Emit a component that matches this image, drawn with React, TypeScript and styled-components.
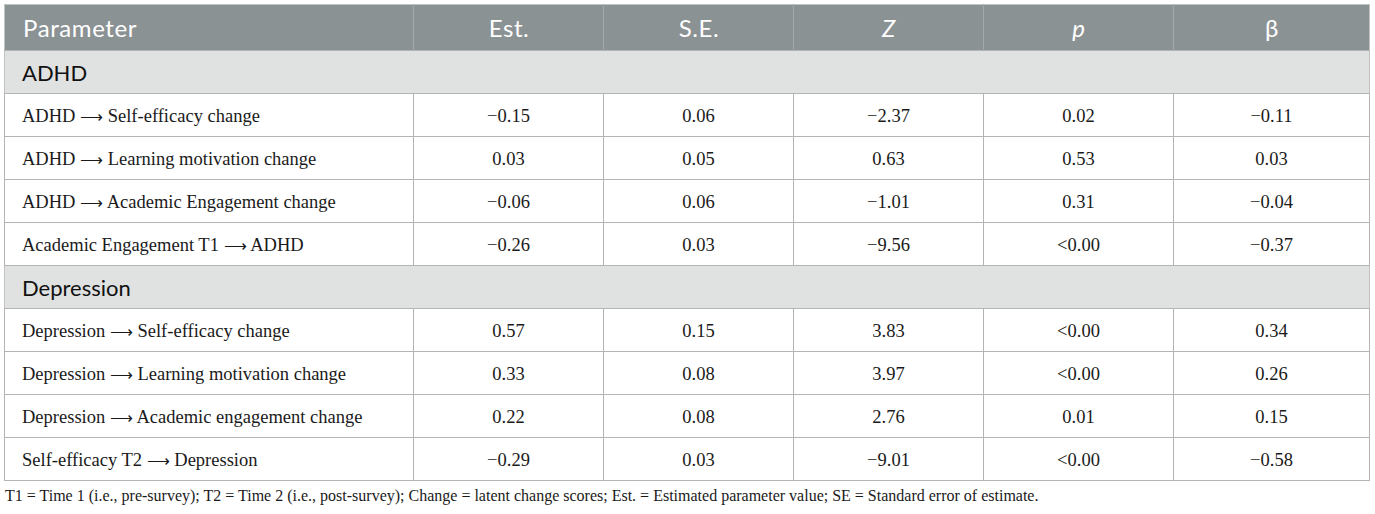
import React from "react";
import styled, { createGlobalStyle } from "styled-components";

const GlobalStyle = createGlobalStyle`
  html, body {
    margin: 0;
    padding: 0;
    background: #fff;
  }
`;

const Page = styled.div`
  padding: 4px 5px 0 4px;
`;

const Table = styled.table`
  width: 1366px;
  border-collapse: collapse;
  table-layout: fixed;
  border: 1px solid #c2c4c4;
`;

const HeadCell = styled.th<{ $align?: string; $italic?: boolean }>`
  height: 46px;
  box-sizing: border-box;
  background: #8b9294;
  color: #fff;
  font-family: Lato, "Open Sans", sans-serif;
  font-weight: 400;
  font-size: 24px;
  letter-spacing: 0.6px;
  font-style: ${(p) => (p.$italic ? "italic" : "normal")};
  text-align: ${(p) => p.$align || "center"};
  padding: 0 17px 0 18px;
  border-left: 1px solid #a3a8aa;
  &:first-child {
    border-left: none;
  }
`;

const SectionCell = styled.td`
  height: 43px;
  box-sizing: border-box;
  background: #e0e2e1;
  color: #111;
  font-family: Lato, "Open Sans", sans-serif;
  font-size: 22px;
  padding: 0 17px;
  border-top: 1px solid #b3b5b5;
  border-bottom: 1px solid #b3b5b5;
`;

const Cell = styled.td<{ $align?: string }>`
  height: 43px;
  box-sizing: border-box;
  color: #1a1a1a;
  font-family: "Liberation Serif", serif;
  font-size: 18.5px;
  text-align: ${(p) => p.$align || "center"};
  padding: 2px 17px 0;
  border: 1px solid #b3b5b5;
`;

const Arrow = styled.span`
  font-family: "DejaVu Sans", sans-serif;
  font-weight: 200;
  font-size: 16px;
`;

const Note = styled.div`
  margin-top: 6px;
  padding-left: 1px;
  font-family: "Liberation Serif", serif;
  font-size: 16px;
  color: #1a1a1a;
`;

type Row = [string, string, string, string, string, string];

const sections: { title: string; rows: Row[] }[] = [
  {
    title: "ADHD",
    rows: [
      ["ADHD|Self-efficacy change", "−0.15", "0.06", "−2.37", "0.02", "−0.11"],
      ["ADHD|Learning motivation change", "0.03", "0.05", "0.63", "0.53", "0.03"],
      ["ADHD|Academic Engagement change", "−0.06", "0.06", "−1.01", "0.31", "−0.04"],
      ["Academic Engagement T1|ADHD", "−0.26", "0.03", "−9.56", "<0.00", "−0.37"],
    ],
  },
  {
    title: "Depression",
    rows: [
      ["Depression|Self-efficacy change", "0.57", "0.15", "3.83", "<0.00", "0.34"],
      ["Depression|Learning motivation change", "0.33", "0.08", "3.97", "<0.00", "0.26"],
      ["Depression|Academic engagement change", "0.22", "0.08", "2.76", "0.01", "0.15"],
      ["Self-efficacy T2|Depression", "−0.29", "0.03", "−9.01", "<0.00", "−0.58"],
    ],
  },
];

function Path({ text }: { text: string }) {
  const [from, to] = text.split("|");
  return (
    <>
      {from} <Arrow>⟶</Arrow> {to}
    </>
  );
}

export default function App() {
  return (
    <Page>
      <GlobalStyle />
      <Table>
        <colgroup>
          <col style={{ width: 409 }} />
          <col style={{ width: 190 }} />
          <col style={{ width: 190 }} />
          <col style={{ width: 190 }} />
          <col style={{ width: 190 }} />
          <col />
        </colgroup>
        <thead>
          <tr>
            <HeadCell $align="left">Parameter</HeadCell>
            <HeadCell>Est.</HeadCell>
            <HeadCell>S.E.</HeadCell>
            <HeadCell $italic>Z</HeadCell>
            <HeadCell $italic>p</HeadCell>
            <HeadCell>β</HeadCell>
          </tr>
        </thead>
        <tbody>
          {sections.map((s) => (
            <React.Fragment key={s.title}>
              <tr>
                <SectionCell colSpan={6}>{s.title}</SectionCell>
              </tr>
              {s.rows.map((r) => (
                <tr key={r[0]}>
                  <Cell $align="left">
                    <Path text={r[0]} />
                  </Cell>
                  {r.slice(1).map((v, i) => (
                    <Cell key={i}>{v}</Cell>
                  ))}
                </tr>
              ))}
            </React.Fragment>
          ))}
        </tbody>
      </Table>
      <Note>
        T1 = Time 1 (i.e., pre-survey); T2 = Time 2 (i.e., post-survey); Change
        = latent change scores; Est. = Estimated parameter value; SE = Standard
        error of estimate.
      </Note>
    </Page>
  );
}
